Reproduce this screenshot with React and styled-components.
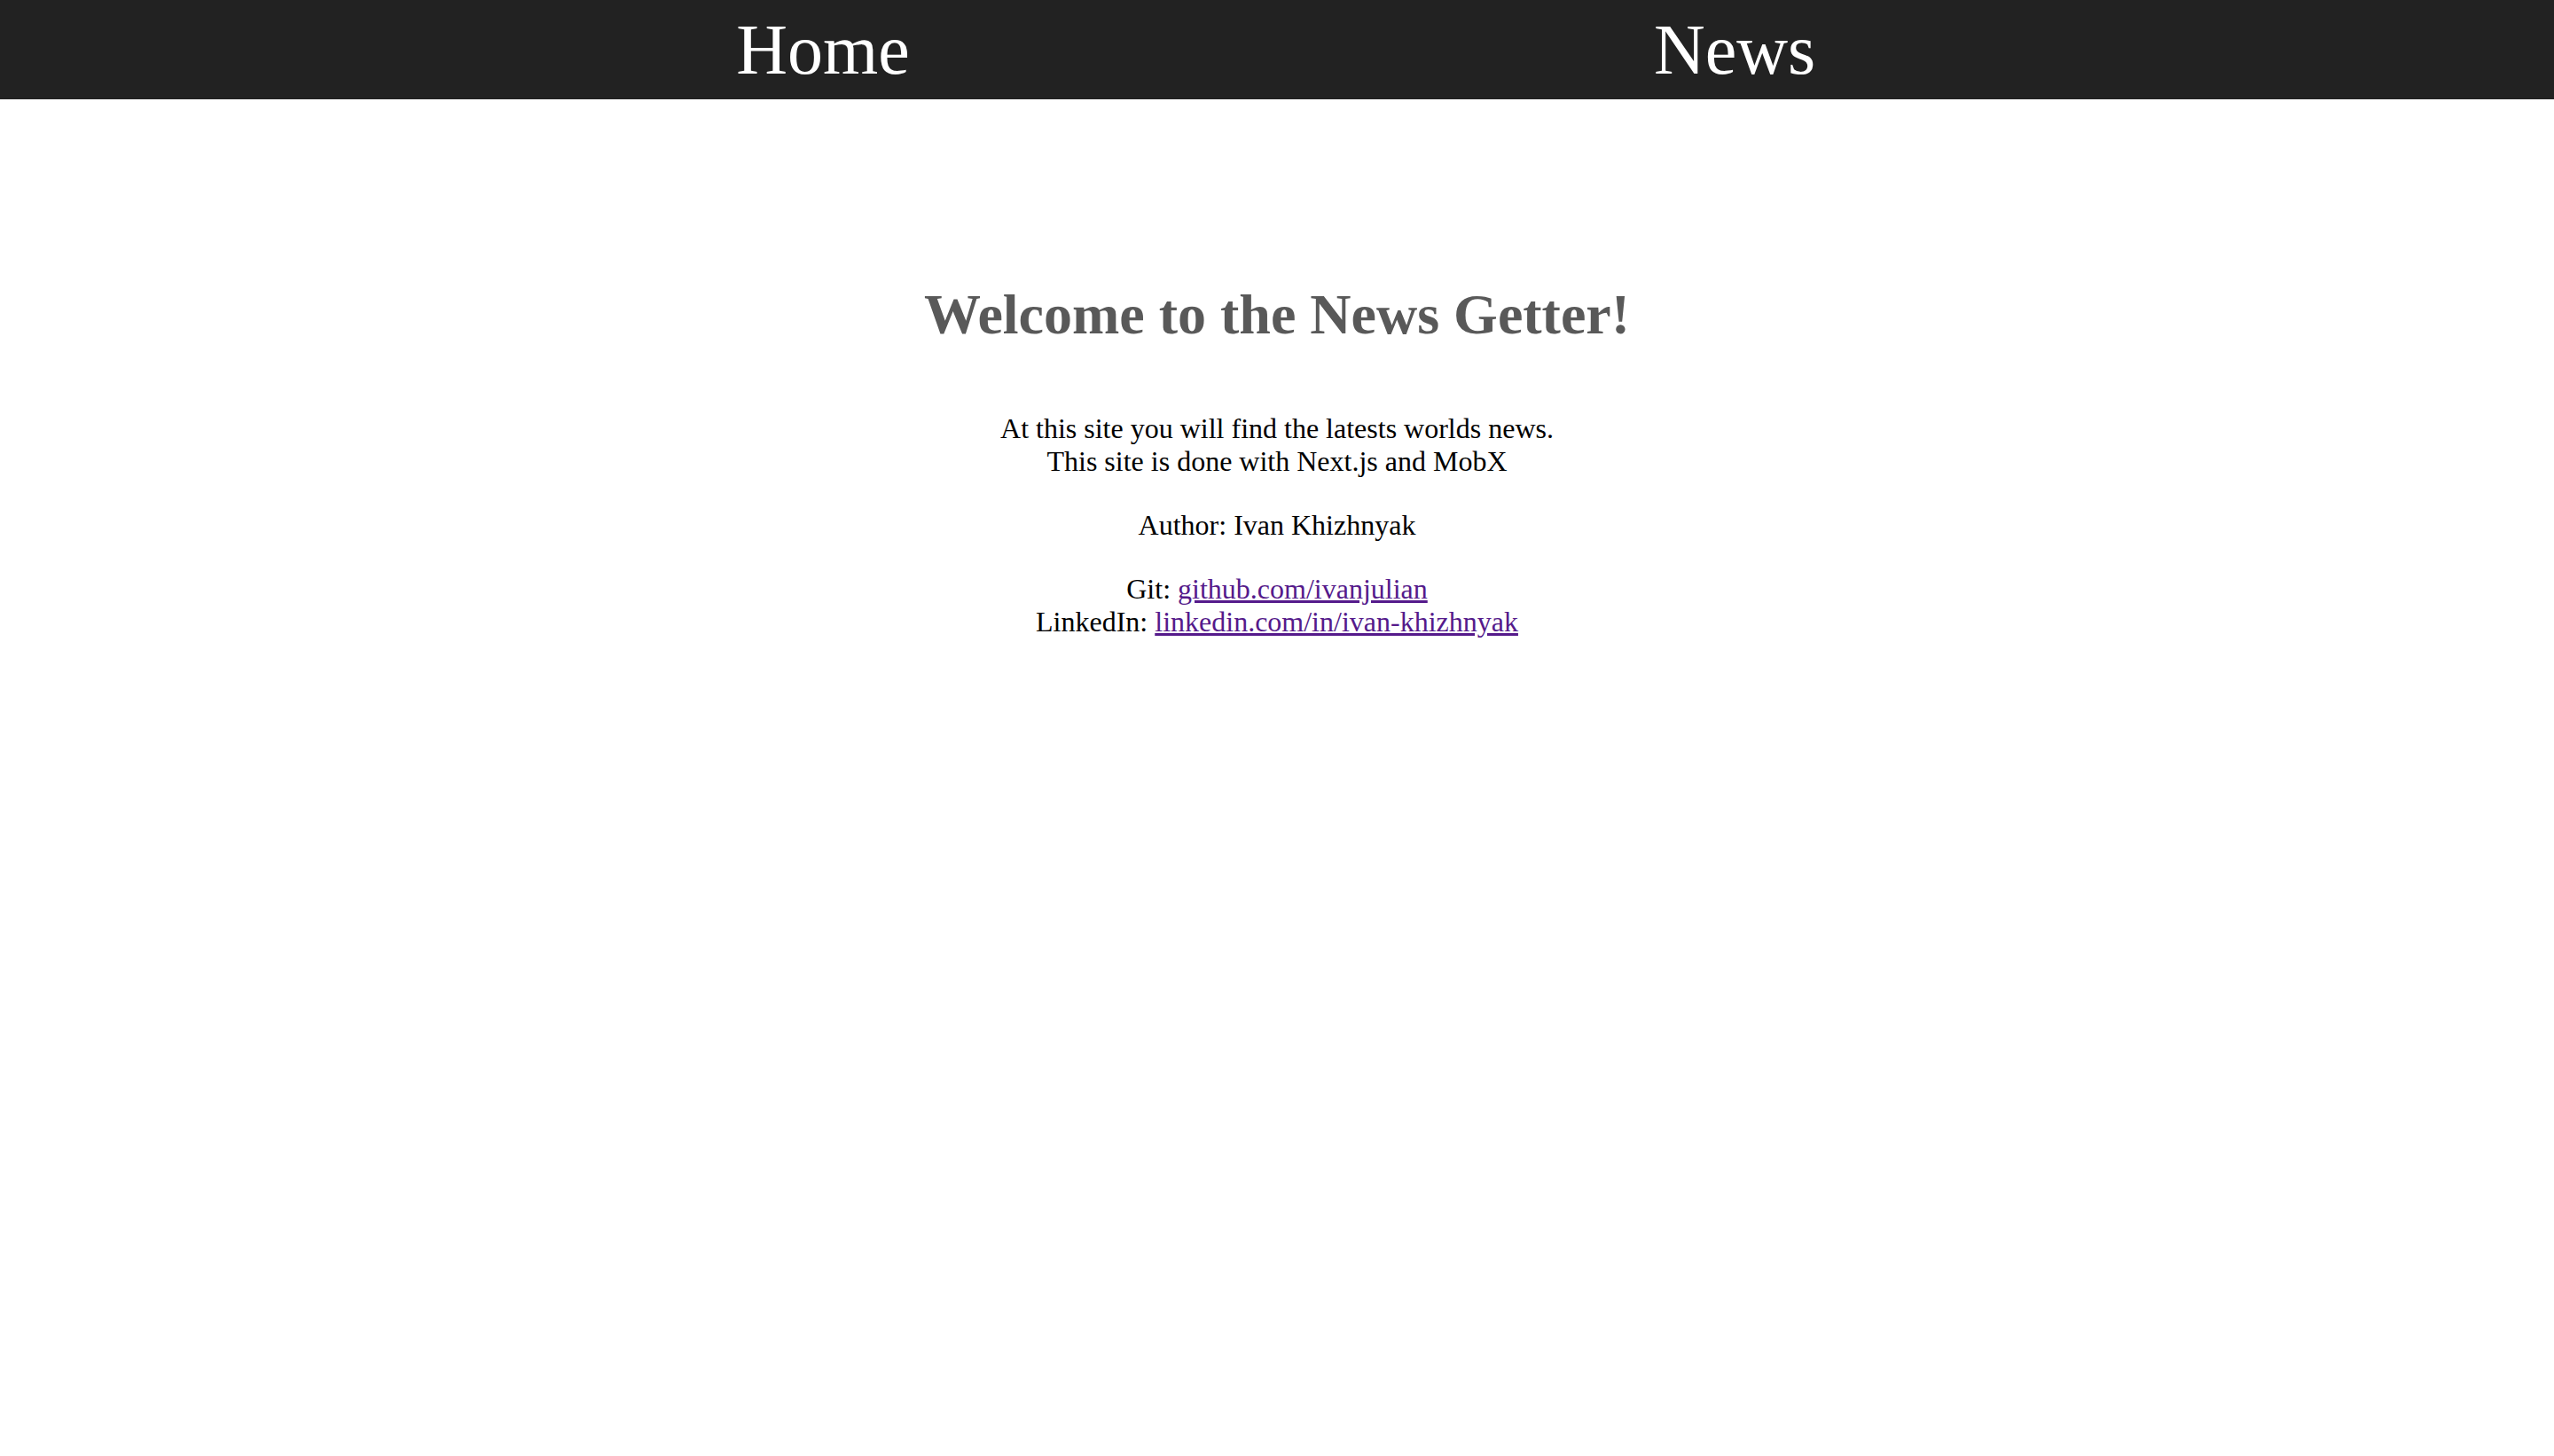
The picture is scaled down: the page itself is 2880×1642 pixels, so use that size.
import React from 'react';
import styled, { createGlobalStyle } from 'styled-components';

const GlobalStyle = createGlobalStyle`
  html, body {
    margin: 0;
    padding: 0;
    background: #fff;
  }
  body {
    font-family: "Liberation Serif", "Times New Roman", serif;
    font-size: 32px;
    color: #000;
  }
`;

const NavBar = styled.nav`
  display: flex;
  align-items: center;
  height: 112px;
  padding: 0 410px 0 414px;
  box-sizing: border-box;
  background: #222222;
`;

const NavLink = styled.a`
  flex: 1;
  text-align: center;
  font-size: 80px;
  line-height: 92px;
  color: #fff;
  text-decoration: none;
  cursor: pointer;
`;

const Main = styled.main`
  display: flex;
  flex-direction: column;
  align-items: center;
  padding-top: 163px;
  text-align: center;
`;

const Title = styled.h1`
  margin: 43px 0 73px;
  font-size: 64px;
  font-weight: bold;
  color: #595959;
`;

const Text = styled.p`
  margin: 0 0 35px;
  line-height: 37px;
`;

const ExtLink = styled.a`
  color: #551a8b;
  text-decoration: underline;
`;

export default function App() {
  return (
    <>
      <GlobalStyle />
      <NavBar>
        <NavLink href="#">Home</NavLink>
        <NavLink href="#">News</NavLink>
      </NavBar>
      <Main>
        <Title>Welcome to the News Getter!</Title>
        <Text>
          At this site you will find the latests worlds news.
          <br />
          This site is done with Next.js and MobX
        </Text>
        <Text>Author: Ivan Khizhnyak</Text>
        <Text>
          Git: <ExtLink href="#">github.com/ivanjulian</ExtLink>
          <br />
          LinkedIn: <ExtLink href="#">linkedin.com/in/ivan-khizhnyak</ExtLink>
        </Text>
      </Main>
    </>
  );
}
